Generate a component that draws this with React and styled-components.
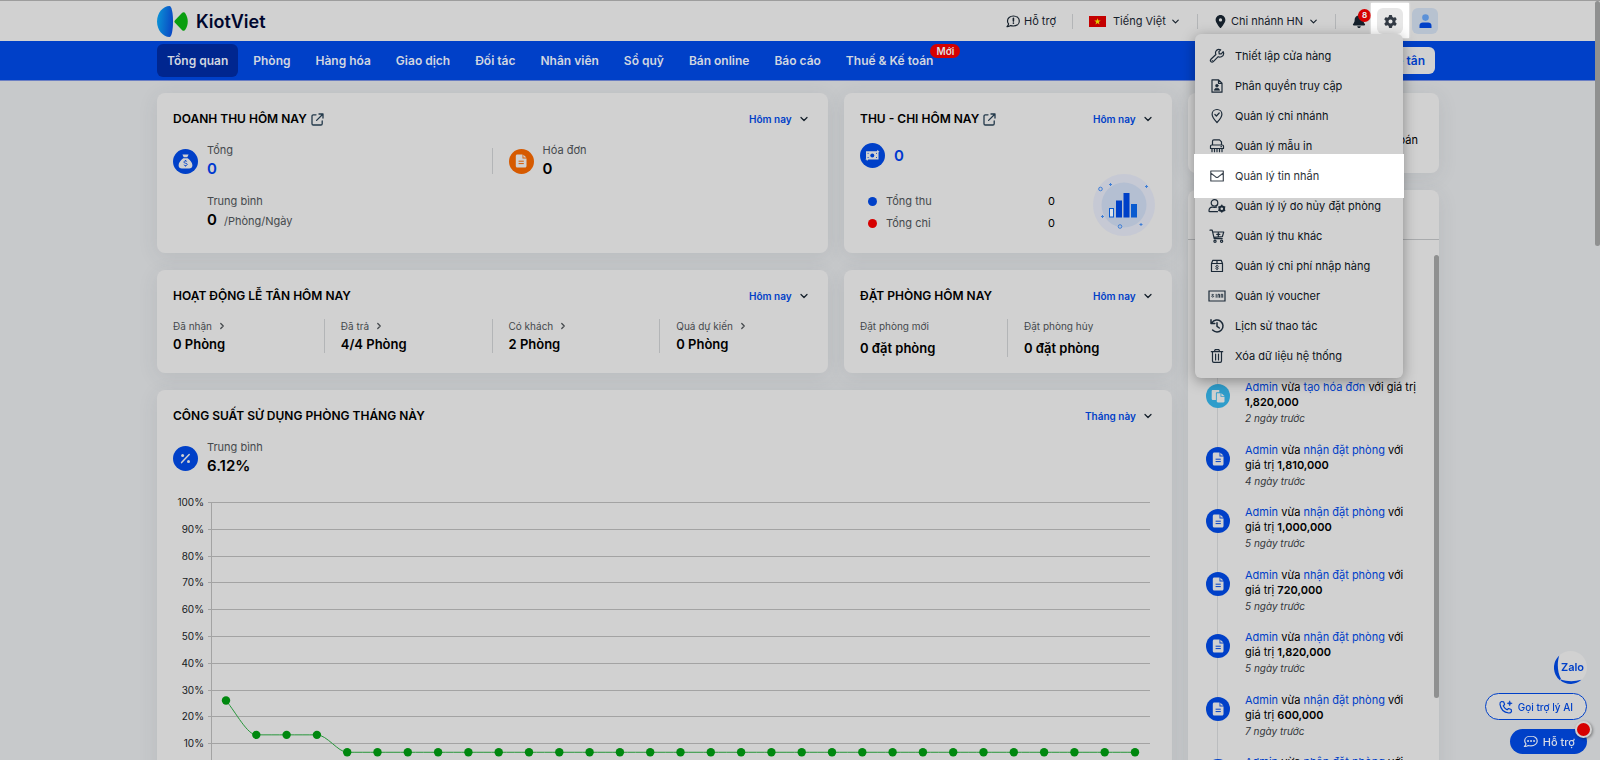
import React from 'react';
import styled, { createGlobalStyle } from 'styled-components';
import { FaGear, FaLocationDot, FaBell } from 'react-icons/fa6';
import { ChevronDown, ChevronRight } from 'lucide-react';

const colors = {
  page: '#c7c9cb',
  card: '#d1d1d1',
  blue: '#0040c8',
  navy: '#00268f',
  red: '#d60000',
  orange: '#d65a00',
  green: '#00880f',
  ink: '#15202b',
  muted: '#45494d',
  line: '#b3b5b7',
};

const GlobalStyle = createGlobalStyle`
  * {
    box-sizing: border-box;
  }

  body {
    margin: 0;
    background-color: ${colors.page};
    color: #000;
    font-family: Inter, 'Noto Sans', sans-serif;
    font-size: 11px;
  }

  button, select {
    font: inherit;
    color: inherit;
    border: 0;
    background: none;
    padding: 0;
    cursor: pointer;
  }

  a {
    color: ${colors.blue};
    text-decoration: none;
  }

  h1, h2, p, ul, dl, dd {
    margin: 0;
    padding: 0;
    list-style: none;
  }

  svg {
    display: block;
    flex-shrink: 0;
  }
`;

const Page = styled.div`
  position: relative;
  height: 100vh;
  overflow: hidden;
  padding-right: 4px;
`;

const Container = styled.div`
  max-width: 1282px;
  margin: 0 auto;
  display: flex;
  align-items: center;
`;

/* ---------- header ---------- */

const Header = styled.header`
  background-color: ${colors.card};
  border-top: 1px solid #9d9d9d;
  margin-right: -4px;
  padding-right: 4px;

  ${Container} {
    height: 40px;
    padding-right: 1px;
    justify-content: space-between;
  }
`;

const Brand = styled.a`
  display: flex;
  align-items: center;
  gap: 7px;
  color: #00072e;
  font-size: 18px;
  font-weight: 600;
`;

const HeaderTools = styled.div`
  display: flex;
  align-items: center;
  gap: 16px;
`;

const HeaderLink = styled.a`
  display: flex;
  align-items: center;
  gap: 4px;
  color: ${colors.ink};
`;

const Divider = styled.span`
  width: 1px;
  height: 15px;
  background-color: ${colors.line};
`;

const SelectWrap = styled.label`
  position: relative;
  display: flex;
  align-items: center;
  gap: ${(props) => props.$gap || 0}px;

  select {
    appearance: none;
    outline: none;
    padding-right: ${(props) => (props.$blue ? 20 : 15)}px;
    color: ${(props) => (props.$blue ? colors.blue : colors.ink)};
    font-size: ${(props) => (props.$blue ? 10 : 11)}px;
    font-weight: ${(props) => (props.$blue ? 600 : 400)};
    line-height: 20px;
  }

  .chevron {
    position: absolute;
    right: ${(props) => (props.$blue ? 2 : 0)}px;
    pointer-events: none;
    color: ${colors.ink};
  }
`;

const HeaderActions = styled.div`
  display: flex;
  align-items: center;
  gap: 9px;
  position: relative;
`;

const BellButton = styled.button`
  position: relative;
  color: ${colors.ink};
  margin-right: 2px;
`;

const BellCount = styled.span`
  position: absolute;
  top: -5px;
  right: -5px;
  width: 13px;
  height: 13px;
  border-radius: 50%;
  background-color: ${colors.red};
  color: #e6e6e6;
  font-size: 8px;
  font-weight: 700;
  line-height: 13px;
`;

const SquareButton = styled.button`
  position: relative;
  z-index: 1;
  display: flex;
  align-items: center;
  justify-content: center;
  width: 26px;
  height: 26px;
  border-radius: 6px;
  background-color: ${(props) => (props.$spot ? '#e7e7e7' : '#b7c2d0')};
  color: #333b45;
`;

const Spotlight = styled.span`
  position: relative;
  display: flex;

  &::before {
    content: '';
    position: absolute;
    inset: -5px -6px -4px -6px;
    background-color: #fff;
    box-shadow: 0 0 2px #fff;
  }
`;

/* ---------- navigation ---------- */

const NavBar = styled.nav`
  background-color: ${colors.blue};
  border-bottom: 1px solid #6b7fc4;

  ${Container} {
    height: 39px;
    gap: 5px;
  }
`;

const NavItem = styled.a`
  position: relative;
  padding: 0 10px;
  border-radius: 6px;
  background-color: ${(props) => (props.$active ? colors.navy : 'transparent')};
  color: #d1d6e0;
  font-size: 12px;
  font-weight: 600;
  line-height: 33px;
  white-space: nowrap;
`;

const NewBadge = styled.span`
  position: absolute;
  top: 0;
  left: calc(100% - 13px);
  padding: 0 6px;
  border-radius: 7px;
  background-color: ${colors.red};
  color: #dedede;
  font-size: 10px;
  line-height: 14px;
`;

const FrontDeskButton = styled.button`
  margin: 0 4px 0 auto;
  padding: 0 10px 0 30px;
  border-radius: 6px;
  background-color: ${colors.card};
  color: ${colors.blue};
  font-size: 12px;
  font-weight: 600;
  line-height: 27px;
`;

/* ---------- settings menu ---------- */

const Menu = styled.ul`
  position: absolute;
  z-index: 5;
  top: 26px;
  right: 35px;
  width: 208px;
  padding: 7px 0;
  border-radius: 6px;
  background-color: ${colors.card};
  box-shadow: 0 3px 14px rgba(0, 0, 0, 0.35);
`;

const MenuItem = styled.li`
  position: relative;
  z-index: ${(props) => (props.$spot ? 1 : 0)};

  &::before {
    content: '';
    display: ${(props) => (props.$spot ? 'block' : 'none')};
    position: absolute;
    inset: -7px -1px;
    background-color: #fff;
  }

  button {
    position: relative;
    display: grid;
    grid-template-columns: 18px 1fr;
    gap: 9px;
    align-items: center;
    justify-items: center;
    width: 100%;
    height: 30px;
    padding: 0 13px;
    color: ${(props) => (props.$spot ? '#2b3138' : '#0d141b')};
  }

  span {
    justify-self: start;
    white-space: nowrap;
  }
`;

/* ---------- dashboard ---------- */

const Dashboard = styled.main`
  max-width: 1282px;
  margin: 0 auto;
  padding-top: 12px;
  display: grid;
  grid-template-columns: minmax(0, 1fr) 251px;
  gap: 16px;
  align-items: start;
`;

const MainColumn = styled.div`
  display: grid;
  grid-template-columns: minmax(0, 1fr) 328px;
  gap: 17px 16px;
`;

const SideColumn = styled.aside`
  display: flex;
  flex-direction: column;
  gap: 17px;
`;

const Card = styled.section`
  grid-column: ${(props) => (props.$full ? '1 / -1' : 'auto')};
  padding: 16px 16px ${(props) => props.$bottom || 20}px;
  border-radius: 8px;
  background-color: ${colors.card};
  box-shadow: 0 4px 20px rgba(60, 70, 80, 0.1);
`;

const CardHead = styled.div`
  display: flex;
  align-items: center;
  justify-content: space-between;
  margin-bottom: 13px;
`;

const CardTitle = styled.h2`
  display: flex;
  align-items: center;
  gap: 4px;
  font-size: 12px;
  font-weight: 600;
  line-height: 20px;
`;

/* columns bleed to the card edge so that the dividers split it evenly */
const Columns = styled.div`
  display: grid;
  grid-template-columns: repeat(${(props) => props.$count}, 1fr);
  margin: 0 -16px;
`;

const Column = styled.div`
  display: flex;
  gap: 9px;
  align-items: center;
  padding: 0 16px;

  & + & {
    position: relative;
  }

  & + &::before {
    content: '';
    position: absolute;
    left: -1px;
    top: ${(props) => props.$inset || 0}px;
    bottom: ${(props) => props.$inset || 0}px;
    width: 1px;
    background-color: ${colors.line};
  }
`;

const RoundIcon = styled.span`
  flex-shrink: 0;
  display: flex;
  align-items: center;
  justify-content: center;
  width: ${(props) => props.$size || 25}px;
  height: ${(props) => props.$size || 25}px;
  border-radius: 50%;
  background-color: ${(props) => props.$color || colors.blue};
  color: ${colors.card};
`;

const Metric = styled.dl`
  color: ${colors.muted};
  margin-left: ${(props) => props.$indent || 0}px;

  dt {
    line-height: 17px;
  }

  dd {
    line-height: 20px;
  }

  strong {
    margin-right: 4px;
    color: ${(props) => (props.$blue ? '#0038d0' : '#000')};
    font-size: 15px;
    font-weight: 600;
  }
`;

const AverageRow = styled.div`
  padding-top: 13px;
`;

const RoomStat = styled.dl`
  dt {
    display: flex;
    align-items: center;
    gap: 5px;
    color: ${colors.muted};
    font-size: 10px;
    line-height: 14px;
  }

  dd {
    padding-top: ${(props) => (props.$loose ? 6 : 2)}px;
    font-size: 13px;
    font-weight: 600;
    line-height: 18px;
  }
`;

const CashTotal = styled.div`
  display: flex;
  align-items: center;
  gap: 9px;
  height: 26px;
  color: #0038d0;
  font-size: 15px;
  font-weight: 600;
`;

const CashBody = styled.div`
  display: flex;
  align-items: flex-end;
  padding: 6px 1px 0 8px;
`;

const CashList = styled.dl`
  flex: 1;
  margin-right: 38px;
  padding-bottom: 2px;

  div {
    display: flex;
    align-items: center;
    gap: 9px;
    line-height: 22px;
  }

  dt {
    color: ${colors.muted};
  }

  dd {
    margin-left: auto;
  }
`;

const Dot = styled.span`
  width: 9px;
  height: 9px;
  border-radius: 50%;
  background-color: ${(props) => props.$color};
`;

const Occupancy = styled.div`
  display: flex;
  align-items: center;
  gap: 9px;
  margin-bottom: 15px;
`;

const ChartSvg = styled.svg`
  width: 100%;
  height: auto;

  text {
    font-size: 10px;
    fill: #16191c;
    text-anchor: end;
  }
`;

/* ---------- activity feed ---------- */

const NoticeCard = styled(Card)`
  height: 80px;
  padding: 39px 21px 0;
  text-align: right;
  line-height: 16px;
`;

const FeedCard = styled(Card)`
  position: relative;
  padding: 0;
`;

const FeedHead = styled.div`
  height: 50px;
  border-bottom: 1px solid #a9abad;
`;

const Feed = styled.ul`
  position: relative;
  display: grid;
  grid-auto-rows: 1fr;
  height: 578px;
  padding: 140px 18px 0;

  &::before {
    content: '';
    position: absolute;
    top: 14px;
    bottom: 0;
    left: 29px;
    width: 1px;
    background-color: #bbbdbf;
  }
`;

const FeedItem = styled.li`
  display: flex;
  gap: 15px;
  line-height: 15px;

  ${RoundIcon} {
    position: relative;
    margin-top: 4px;
  }

  em {
    display: block;
    color: #33373b;
    font-size: 10px;
    line-height: 16px;
  }

  strong {
    font-weight: 600;
  }
`;

const FeedThumb = styled.span`
  position: absolute;
  top: 65px;
  right: 0;
  width: 5px;
  height: 443px;
  border-radius: 3px;
  background-color: #8f9090;
`;

const PageThumb = styled.span`
  position: absolute;
  z-index: 4;
  top: 1px;
  right: 0;
  width: 5px;
  height: 245px;
  border-radius: 3px;
  background-color: #8f9090;
`;

/* ---------- floating contact buttons ---------- */

const Floating = styled.div`
  position: fixed;
  z-index: 6;
  right: 13px;
  bottom: 6px;
  display: flex;
  flex-direction: column;
  align-items: flex-end;
  gap: 9px;
`;

const ZaloButton = styled.button`
  width: 33px;
  height: 33px;
`;

const AiButton = styled.button`
  display: flex;
  align-items: center;
  gap: 5px;
  height: 27px;
  padding: 0 13px;
  border: 1px solid ${colors.blue};
  border-radius: 14px;
  background-color: ${colors.card};
  color: ${colors.blue};
  font-size: 10px;
  font-weight: 500;
`;

const HelpButton = styled.button`
  position: relative;
  display: flex;
  align-items: center;
  gap: 5px;
  height: 25px;
  padding: 0 12px 0 13px;
  border-radius: 13px;
  background-color: ${colors.blue};
  color: #d6dbe6;
  font-weight: 500;
`;

const HelpDot = styled.span`
  position: absolute;
  top: -8px;
  right: -5px;
  width: 17px;
  height: 17px;
  border: 2px solid ${colors.card};
  border-radius: 50%;
  background-color: ${colors.red};
  box-shadow: 1px 1px 3px rgba(0, 0, 0, 0.4);
`;

/* ---------- drawings ---------- */

const Logo = () => (
  <svg width="32" height="31" viewBox="0 0 32 31" aria-hidden="true">
    <defs>
      <linearGradient id="logoBlue" x1="0" x2="1" y1="0.3" y2="0.5">
        <stop offset="0" stopColor="#0a93d6" />
        <stop offset="1" stopColor="#0a48c4" />
      </linearGradient>
    </defs>
    <path d="M12.500 0C14.600 0 16 6.600 16 15.500S14.600 31 12.500 31C6 31 0 24 0 15.500S6 0 12.500 0Z" fill="url(#logoBlue)" />
    <path d="M18 14.200l7.200-7.400c1-1 2.500-.8 3.200.6C31.600 12.400 31.600 18.600 28.400 23.600c-.7 1.400-2.200 1.600-3.200.6L18 16.800c-.8-.8-.8-1.800 0-2.600Z" fill="#0a9e10" />
  </svg>
);

const ExternalIcon = () => (
  <svg width="13" height="13" viewBox="0 0 13 13" fill="none" stroke="#22384a" strokeWidth="1.300" strokeLinecap="round" strokeLinejoin="round">
    <path d="M5 1.800H2.300a1.300 1.300 0 0 0-1.300 1.300v7.600A1.300 1.300 0 0 0 2.300 12h7.600a1.300 1.300 0 0 0 1.300-1.300V8M8 1h4v4M12 1L5.600 7.400" />
  </svg>
);

const SupportIcon = () => (
  <svg width="14" height="13" viewBox="0 0 14 13" fill="none" stroke={colors.ink} strokeWidth="1.200" strokeLinejoin="round" strokeLinecap="round">
    <path d="M7.400 1C3.900 1 1.500 3.200 1.500 5.900c0 1.200.4 2.200 1.100 3-.1 1.100-.8 2-1.600 2.700 1.400.1 2.700-.3 3.700-1 .8.300 1.700.4 2.700.4 3.500 0 5.900-2.300 5.900-5.100S10.900 1 7.400 1Z" />
    <path d="M7.400 3.300v2.800M7.400 8.100v.2" strokeWidth="1.600" />
  </svg>
);

const Flag = () => (
  <svg width="17" height="11" viewBox="0 0 17 11">
    <rect width="17" height="11" fill="#c40000" />
    <path d="M8.500 2.200l.8 2.300h2.400l-1.900 1.500.7 2.400-2-1.400-2 1.400.7-2.400-1.900-1.500h2.400z" fill="#e0d000" />
  </svg>
);

const AvatarIcon = () => (
  <svg width="13" height="14" viewBox="0 0 13 14">
    <circle cx="6.500" cy="3.600" r="3.300" fill="#5b91d8" />
    <path d="M.5 14v-2.300C.5 9.600 2 8.500 3.800 8.500h5.400c1.800 0 3.300 1.100 3.300 3.200V14Z" fill={colors.blue} />
  </svg>
);

const MoneyBagIcon = () => (
  <svg width="15" height="15" viewBox="0 0 15 15" fill="currentColor">
    <path d="M4.400.6h6.200L9.300 3.300H5.700zM5.200 4.200h4.600c2.300 1.700 4.600 4.400 4.600 7.100 0 2.200-1.300 3.300-3.300 3.300H3.900c-2 0-3.300-1.100-3.300-3.300 0-2.700 2.300-5.400 4.600-7.100Z" />
    <path d="M9.100 7.700c-.4-.5-1-.7-1.600-.7-.9 0-1.600.4-1.600 1.100 0 1.600 3.300.7 3.300 2.300 0 .8-.8 1.200-1.700 1.200-.7 0-1.300-.3-1.700-.8M7.500 6.100V7m0 4.600v.9" fill="none" stroke={colors.blue} strokeWidth=".9" />
  </svg>
);

const DocIcon = ({ line }) => (
  <svg width="13" height="14" viewBox="0 0 13 14" fill="currentColor">
    <path d="M2.300.5h5.200v4h4V12c0 .9-.6 1.500-1.500 1.500H2.300c-.9 0-1.500-.6-1.500-1.500V2C.8 1.100 1.400.5 2.300.5Z" />
    <path d="M8.400.7l3 2.900h-3z" />
    <path d="M3.600 7.200h5.200M3.600 9.600h5.200" stroke={line} strokeWidth="1" />
  </svg>
);

const CopyDocIcon = () => (
  <svg width="14" height="14" viewBox="0 0 14 14" fill="currentColor">
    <path d="M1.500 1h6.800v2.300H6.200c-.8 0-1.300.5-1.300 1.300v6.500H2.200C1.300 11.100.7 10.600.7 9.700V1.900c0-.5.300-.9.800-.9Z" />
    <path d="M5.800 4.200h3.700v3.600h4v4.500c0 .7-.4 1.100-1.100 1.100H6.900c-.7 0-1.100-.4-1.100-1.100Z" />
    <path d="M10.400 4.200l3.100 2.800h-3.100z" />
  </svg>
);

const BanknoteIcon = () => (
  <svg width="15" height="13" viewBox="0 0 15 13" fill="currentColor">
    <path d="M1 2.200h10.700L13 .8l.3 1.300 1.200.3-1 1.100V10.600H3.300L2 12l-.4-1.200-1.100-.3L1 9.400Z" />
    <circle cx="7.300" cy="6.400" r="2" fill={colors.blue} />
    <path d="M2.600 4.400h1M11 8.500h1M2.600 8.500h1M11 4.400h1" stroke={colors.blue} strokeWidth=".9" />
  </svg>
);

const PercentIcon = () => (
  <svg width="11" height="11" viewBox="0 0 11 11" fill="currentColor">
    <path d="M1.600 9.600L9.200 1.600" stroke="currentColor" strokeWidth="1.500" strokeLinecap="round" />
    <circle cx="2.600" cy="2.500" r="1.500" />
    <circle cx="8.500" cy="8.600" r="1.500" />
  </svg>
);

const BarsIllustration = () => (
  <svg width="62" height="62" viewBox="0 0 62 62">
    <circle cx="31" cy="31" r="31" fill="#c6c9d4" />
    <circle cx="31" cy="31" r="22.500" fill="#b4bfd2" />
    <rect x="16.500" y="34.500" width="4" height="8.500" fill="#dfe3ea" stroke="#0a5bd0" />
    <rect x="23" y="26.500" width="6" height="17" fill="#0040c8" />
    <rect x="30.500" y="19" width="6" height="24.500" fill="#0040c8" />
    <rect x="38" y="30" width="6" height="13.500" fill="#0a5bd0" />
    <g fill="none" stroke="#3f7fd6">
      <circle cx="7.500" cy="15" r="1.800" />
      <circle cx="27" cy="52.500" r="1.800" />
      <path d="M16 10.500h3M17.500 9v3M52 12.500h3M53.500 11v3M8 42.500h3M9.500 41v3M46.500 50.500h3M48 49v3" />
    </g>
  </svg>
);

const LineIcon = ({ children, width = 16 }) => (
  <svg width={width} height="16" viewBox={`0 0 ${width} 16`} fill="none" stroke="#1c2a38" strokeWidth="1.200" strokeLinecap="round" strokeLinejoin="round">
    {children}
  </svg>
);

const menuItems = [
  {
    label: 'Thiết lập cửa hàng',
    icon: (
      <LineIcon>
        <path d="M10.200 5.800l2.100.1 1.900-2.200c.8 2 .1 4.200-1.800 5-1.200.5-2.300.4-3.200 0l-4.900 5c-.7.7-1.800.7-2.400 0-.7-.7-.6-1.700 0-2.400l5-4.800c-.5-1.100-.5-2.300 0-3.200.9-1.700 3-2.300 4.800-1.500L9.900 3.700z" />
        <path d="M3.300 12.700v.1" />
      </LineIcon>
    ),
  },
  {
    label: 'Phân quyền truy cập',
    icon: (
      <LineIcon>
        <path d="M3 1.800h6.600L13 5.200v9H3zM9.500 2v3.300H13" />
        <circle cx="7.900" cy="7.700" r="1.400" fill="#1c2a38" strokeWidth=".5" />
        <path d="M5.300 12.200c0-1.500 1-2 2.600-2s2.600.5 2.600 2z" fill="#1c2a38" strokeWidth=".5" />
      </LineIcon>
    ),
  },
  {
    label: 'Quản lý chi nhánh',
    icon: (
      <LineIcon>
        <path d="M8 1.500c2.800 0 4.900 2.100 4.900 4.800C12.900 9.500 8 14.500 8 14.500S3.100 9.500 3.100 6.300C3.100 3.600 5.200 1.500 8 1.500Z" />
        <path d="M5.900 6.500l1.500 1.500 2.800-3" />
      </LineIcon>
    ),
  },
  {
    label: 'Quản lý mẫu in',
    icon: (
      <LineIcon>
        <path d="M3.500 7V3.200c0-.8.500-1.300 1.300-1.300h5.700l2 2V7M2.700 7h10.600c.7 0 1.200.5 1.200 1.200v2.300h-13V8.200C1.500 7.500 2 7 2.700 7ZM12 8.700h.4" />
        <path d="M3 10.700v3M5.500 10.700v3M8 10.700v3M10.500 10.700v3M13 10.700v3" />
      </LineIcon>
    ),
  },
  {
    label: 'Quản lý tin nhắn',
    spot: true,
    icon: (
      <LineIcon>
        <path d="M1.800 3h12.500v10H1.800zM2 5.200l4.700 3.700c.8.600 1.800.6 2.600 0L14 5.200" stroke="#3f4852" />
      </LineIcon>
    ),
  },
  {
    label: 'Quản lý lý do hủy đặt phòng',
    icon: (
      <LineIcon width={18}>
        <circle cx="6.500" cy="4.900" r="3.300" />
        <path d="M9.500 13.700H1.700c-.4 0-.7-.3-.7-.7 0-2.600 1.300-3.900 3.400-3.900.6 0 1.200.4 2.100.4s1.500-.4 2.100-.4" />
        <circle cx="13.800" cy="10.700" r="2.300" strokeWidth="2" />
        <path d="M13.800 7.300v.5M13.800 13.600v.5M10.900 9l.4.300M16.300 12.100l.4.300M10.900 12.400l.4-.3M16.300 9.300l.4-.3" strokeWidth="1.500" />
      </LineIcon>
    ),
  },
  {
    label: 'Quản lý thu khác',
    icon: (
      <LineIcon>
        <path d="M1 2.200h2.200l2 8.500h8M3.700 4h11l-1.300 4.700-8.500.6M9.300 4.900v3M7.800 6.400h3" />
        <circle cx="6" cy="13.200" r="1.100" />
        <circle cx="12.600" cy="13.200" r="1.100" />
      </LineIcon>
    ),
  },
  {
    label: 'Quản lý chi phí nhập hàng',
    icon: (
      <LineIcon>
        <path d="M2.500 5.500l1.300-3.200h8.400l1.300 3.200v8h-11zM2.500 5.500h11M8 2.500v3" />
        <path d="M9.400 8.200c-.9-.7-2.700-.6-2.700.4s2.600.6 2.600 1.600-1.700 1.100-2.600.4M8 7.100v.5M8 11.300v.5" strokeWidth=".9" />
      </LineIcon>
    ),
  },
  {
    label: 'Quản lý voucher',
    icon: (
      <LineIcon width={18}>
        <path d="M1 3h16v10H1z" strokeLinejoin="miter" />
        <path d="M5.600 6.700c-.6-.5-1.900-.4-1.900.3s1.900.6 1.900 1.400-1.300.9-1.900.3M8.200 6.300v3M10 9.300v-3h1.500v3M13.200 9.300v-3h1.500v3" strokeWidth=".9" />
      </LineIcon>
    ),
  },
  {
    label: 'Lịch sử thao tác',
    icon: (
      <LineIcon>
        <path d="M3 4.700a6 6 0 1 1 .6 7.400M2 1.700v3.800h3.800M8 4.700V8.300l2.300 1.700" strokeWidth="1.500" />
      </LineIcon>
    ),
  },
  {
    label: 'Xóa dữ liệu hệ thống',
    icon: (
      <LineIcon>
        <path d="M2.300 3.700h11.400M5.300 3.500l.9-1.900h3.600l.9 1.900M3.500 3.900V13c0 .9.500 1.400 1.400 1.400h6.200c.9 0 1.400-.5 1.400-1.400V3.900M6.600 6v6M9.500 6v6" />
      </LineIcon>
    ),
  },
];

const navItems = ['Tổng quan', 'Phòng', 'Hàng hóa', 'Giao dịch', 'Đối tác', 'Nhân viên', 'Sổ quỹ', 'Bán online', 'Báo cáo'];

const roomStats = [
  ['Đã nhận', '0 Phòng'],
  ['Đã trả', '4/4 Phòng'],
  ['Có khách', '2 Phòng'],
  ['Quá dự kiến', '0 Phòng'],
];

const bookingStats = [
  ['Đặt phòng mới', '0 đặt phòng'],
  ['Đặt phòng hủy', '0 đặt phòng'],
];

const activities = [
  { action: 'tạo hóa đơn', value: '1,820,000', when: '2 ngày trước', invoice: true },
  { action: 'nhận đặt phòng', value: '1,810,000', when: '4 ngày trước' },
  { action: 'nhận đặt phòng', value: '1,000,000', when: '5 ngày trước' },
  { action: 'nhận đặt phòng', value: '720,000', when: '5 ngày trước' },
  { action: 'nhận đặt phòng', value: '1,820,000', when: '5 ngày trước' },
  { action: 'nhận đặt phòng', value: '600,000', when: '7 ngày trước' },
  { action: 'nhận đặt phòng', value: '850,000', when: '7 ngày trước' },
];

const occupancy = [26.1, 13.3, 13.3, 13.3].concat(Array(27).fill(6.8));

const PeriodSelect = ({ value, name }) => (
  <SelectWrap $blue>
    <select aria-label={name}>
      <option>{value}</option>
    </select>
    <ChevronDown className="chevron" size={12} strokeWidth={2.5} />
  </SelectWrap>
);

const OccupancyChart = () => {
  const x = (i) => 53 + i * 30.3;
  const y = (v) => 278.5 - v * 2.68;

  // the first drop leaves its point on a slope, the later ones start flat
  const path = occupancy.reduce((d, v, i) => {
    if (i === 0) return `M${x(0)} ${y(v)}`;
    const startY = y(occupancy[i - 1]) + (i === 1 ? 12 : 0);
    return `${d}C${x(i - 1) + 10} ${startY} ${x(i) - 9} ${y(v)} ${x(i)} ${y(v)}`;
  }, '');

  return (
    <ChartSvg viewBox="0 0 983 300">
      {[100, 90, 80, 70, 60, 50, 40, 30, 20, 10, 0].map((tick) => {
        const lineY = Math.floor(y(tick)) + 0.5;
        return (
          <g key={tick}>
            <path d={`M35 ${lineY}H977`} stroke="#a3a3a3" />
            <text x="31" y={lineY + 3}>{tick}%</text>
          </g>
        );
      })}
      <path d="M38.500 10.500V278.500" stroke="#a3a3a3" />
      <path d={path} fill="none" stroke="#27963a" />
      {occupancy.map((v, i) => (
        <circle key={i} cx={x(i)} cy={y(v)} r="4.200" fill={colors.green} />
      ))}
    </ChartSvg>
  );
};

const SettingsMenu = () => (
  <Menu>
    {menuItems.map((item) => (
      <MenuItem key={item.label} $spot={item.spot}>
        <button type="button">
          {item.icon}
          <span>{item.label}</span>
        </button>
      </MenuItem>
    ))}
  </Menu>
);

const TopBar = () => (
  <Header>
    <Container>
      <Brand href="#">
        <Logo />
        KiotViet
      </Brand>
      <HeaderTools>
        <HeaderLink href="#">
          <SupportIcon />
          Hỗ trợ
        </HeaderLink>
        <Divider />
        <SelectWrap $gap={7}>
          <Flag />
          <select aria-label="Ngôn ngữ">
            <option>Tiếng Việt</option>
          </select>
          <ChevronDown className="chevron" size={11} strokeWidth={2.5} />
        </SelectWrap>
        <Divider />
        <SelectWrap $gap={4}>
          <FaLocationDot size={13} color={colors.ink} />
          <select aria-label="Chi nhánh">
            <option>Chi nhánh HN</option>
          </select>
          <ChevronDown className="chevron" size={11} strokeWidth={2.5} />
        </SelectWrap>
        <Divider />
        <HeaderActions>
          <BellButton type="button" aria-label="Thông báo">
            <FaBell size={14} />
            <BellCount>8</BellCount>
          </BellButton>
          <Spotlight>
            <SquareButton type="button" aria-label="Thiết lập" $spot>
              <FaGear size={13} />
            </SquareButton>
          </Spotlight>
          <SquareButton type="button" aria-label="Tài khoản">
            <AvatarIcon />
          </SquareButton>
          <SettingsMenu />
        </HeaderActions>
      </HeaderTools>
    </Container>
  </Header>
);

const App = () => {
  return (
    <Page>
      <GlobalStyle />
      <TopBar />
      <NavBar>
        <Container>
          {navItems.map((item, i) => (
            <NavItem key={item} href="#" $active={i === 0}>{item}</NavItem>
          ))}
          <NavItem href="#">
            Thuế &amp; Kế toán
            <NewBadge>Mới</NewBadge>
          </NavItem>
          <FrontDeskButton type="button">Lễ tân</FrontDeskButton>
        </Container>
      </NavBar>

      <Dashboard>
        <MainColumn>
          <Card $bottom={22}>
            <CardHead>
              <CardTitle>DOANH THU HÔM NAY <ExternalIcon /></CardTitle>
              <PeriodSelect name="Kỳ doanh thu" value="Hôm nay" />
            </CardHead>
            <Columns $count={2}>
              <Column $inset={6}>
                <RoundIcon><MoneyBagIcon /></RoundIcon>
                <Metric $blue>
                  <dt>Tổng</dt>
                  <dd><strong>0</strong></dd>
                </Metric>
              </Column>
              <Column $inset={6}>
                <RoundIcon $color={colors.orange}><DocIcon line={colors.orange} /></RoundIcon>
                <Metric>
                  <dt>Hóa đơn</dt>
                  <dd><strong>0</strong></dd>
                </Metric>
              </Column>
            </Columns>
            <AverageRow>
              <Metric $indent={34}>
                <dt>Trung bình</dt>
                <dd><strong>0</strong> /Phòng/Ngày</dd>
              </Metric>
            </AverageRow>
          </Card>

          <Card $bottom={16}>
            <CardHead>
              <CardTitle>THU - CHI HÔM NAY <ExternalIcon /></CardTitle>
              <PeriodSelect name="Kỳ thu chi" value="Hôm nay" />
            </CardHead>
            <CashTotal>
              <RoundIcon><BanknoteIcon /></RoundIcon>
              0
            </CashTotal>
            <CashBody>
              <CashList>
                <div>
                  <Dot $color={colors.blue} />
                  <dt>Tổng thu</dt>
                  <dd>0</dd>
                </div>
                <div>
                  <Dot $color={colors.red} />
                  <dt>Tổng chi</dt>
                  <dd>0</dd>
                </div>
              </CashList>
              <BarsIllustration />
            </CashBody>
          </Card>

          <Card>
            <CardHead>
              <CardTitle>HOẠT ĐỘNG LỄ TÂN HÔM NAY</CardTitle>
              <PeriodSelect name="Kỳ hoạt động" value="Hôm nay" />
            </CardHead>
            <Columns $count={4}>
              {roomStats.map(([label, value]) => (
                <Column key={label}>
                  <RoomStat>
                    <dt>{label} <ChevronRight size={10} strokeWidth={3} /></dt>
                    <dd>{value}</dd>
                  </RoomStat>
                </Column>
              ))}
            </Columns>
          </Card>

          <Card $bottom={16}>
            <CardHead>
              <CardTitle>ĐẶT PHÒNG HÔM NAY</CardTitle>
              <PeriodSelect name="Kỳ đặt phòng" value="Hôm nay" />
            </CardHead>
            <Columns $count={2}>
              {bookingStats.map(([label, value]) => (
                <Column key={label}>
                  <RoomStat $loose>
                    <dt>{label}</dt>
                    <dd>{value}</dd>
                  </RoomStat>
                </Column>
              ))}
            </Columns>
          </Card>

          <Card $full>
            <CardHead>
              <CardTitle>CÔNG SUẤT SỬ DỤNG PHÒNG THÁNG NÀY</CardTitle>
              <PeriodSelect name="Kỳ công suất" value="Tháng này" />
            </CardHead>
            <Occupancy>
              <RoundIcon><PercentIcon /></RoundIcon>
              <Metric>
                <dt>Trung bình</dt>
                <dd><strong>6.12%</strong></dd>
              </Metric>
            </Occupancy>
            <OccupancyChart />
          </Card>
        </MainColumn>

        <SideColumn>
          <NoticeCard as="p">Thanh toán</NoticeCard>
          <FeedCard>
            <FeedHead />
            <Feed>
              {activities.map((item, i) => (
                <FeedItem key={i}>
                  <RoundIcon $size={24} $color={item.invoice ? '#2f9dcb' : colors.blue}>
                    {item.invoice ? <CopyDocIcon /> : <DocIcon line={colors.blue} />}
                  </RoundIcon>
                  <p>
                    <a href="#">Admin</a> vừa <a href="#">{item.action}</a> với giá trị <strong>{item.value}</strong>
                    <em>{item.when}</em>
                  </p>
                </FeedItem>
              ))}
            </Feed>
            <FeedThumb />
          </FeedCard>
        </SideColumn>
      </Dashboard>
      <PageThumb />

      <Floating>
        <ZaloButton type="button" aria-label="Zalo">
          <svg width="33" height="33" viewBox="0 0 33 33">
            <circle cx="16.500" cy="16.500" r="16.500" fill="#d1d1d1" />
            <path d="M5.300 4.400A16.500 16.500 0 0 0 5.800 29.200L7 28C3.200 21 3 11.500 5.300 4.400Z" fill={colors.blue} />
            <path d="M6.500 29.600A16.500 16.500 0 0 0 27.500 28.800C20.500 30.700 13 30.600 7 28.600Z" fill={colors.blue} />
            <text x="7" y="20" fontFamily="Inter" fontSize="11" fontWeight="600" fill={colors.blue}>Zalo</text>
          </svg>
        </ZaloButton>
        <AiButton type="button">
          <svg width="14" height="14" viewBox="0 0 14 14" fill="none" stroke="currentColor" strokeWidth="1.200" strokeLinejoin="round">
            <path d="M4.600 1.800L2.500 1.500C1.400 1.900.8 3 1 4.300c.7 4.600 4.200 8.100 8.800 8.700 1.300.1 2.300-.5 2.700-1.500l-.3-2-2.600-1-1.500 1.300C6.500 9 5.200 7.600 4.300 6l1.300-1.600z" />
            <path d="M10.700.8l.6 1.900 1.900.6-1.900.6-.6 1.900-.6-1.900-1.900-.6 1.900-.6z" fill="currentColor" strokeWidth=".6" />
          </svg>
          Gọi trợ lý AI
        </AiButton>
        <HelpButton type="button">
          <svg width="15" height="13" viewBox="0 0 15 13" fill="none" stroke="currentColor" strokeWidth="1.200" strokeLinejoin="round" strokeLinecap="round">
            <path d="M8 1C4.300 1 1.700 3.100 1.700 5.800c0 1.200.5 2.200 1.300 3-.1 1-.7 1.900-1.600 2.700 1.500.1 2.800-.3 3.800-1 .9.300 1.800.4 2.800.4 3.700 0 6.200-2.300 6.200-5S11.700 1 8 1Z" />
            <path d="M5 6h.1M8 6h.1M11 6h.1" strokeWidth="1.800" />
          </svg>
          Hỗ trợ
          <HelpDot />
        </HelpButton>
      </Floating>
    </Page>
  );
};

export default App;
